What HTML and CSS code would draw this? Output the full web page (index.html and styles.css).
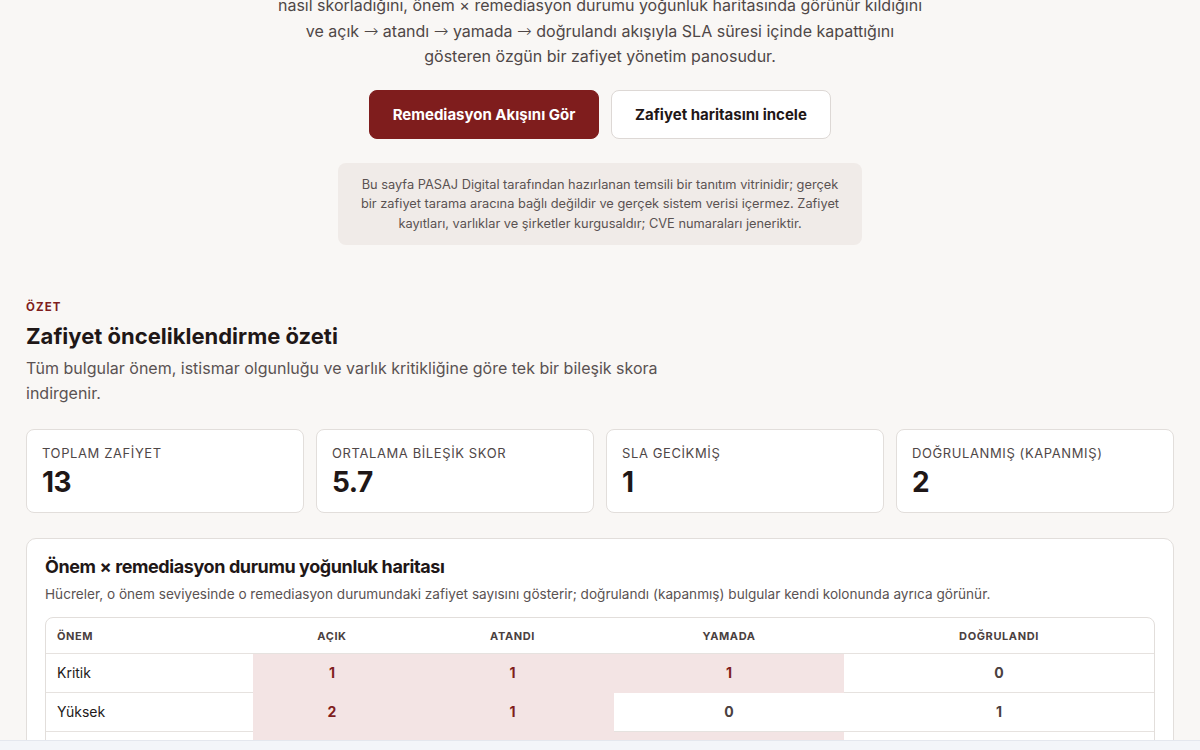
FILE: index.html
```html
<!DOCTYPE html>
<html lang="tr">
<head>
<meta charset="utf-8">
<title>Zafiyet Yönetim Panosu</title>
<link rel="stylesheet" href="styles.css">
</head>
<body>
<main class="page">
  <section class="hero">
    <p class="hero-lead">nasıl skorladığını, önem × remediasyon durumu yoğunluk haritasında görünür kıldığını ve açık <span class="arr">→</span> atandı <span class="arr">→</span> yamada <span class="arr">→</span> doğrulandı akışıyla SLA süresi içinde kapattığını gösteren özgün bir zafiyet yönetim panosudur.</p>
    <div class="hero-actions">
      <a class="btn btn-primary" href="#akis">Remediasyon Akışını Gör</a>
      <a class="btn btn-secondary" href="#harita">Zafiyet haritasını incele</a>
    </div>
    <p class="notice">Bu sayfa PASAJ Digital tarafından hazırlanan temsili bir tanıtım vitrinidir; gerçek bir zafiyet tarama aracına bağlı değildir ve gerçek sistem verisi içermez. Zafiyet kayıtları, varlıklar ve şirketler kurgusaldır; CVE numaraları jeneriktir.</p>
  </section>

  <section class="summary">
    <div class="eyebrow">ÖZET</div>
    <h2 class="section-title">Zafiyet önceliklendirme özeti</h2>
    <p class="section-sub">Tüm bulgular önem, istismar olgunluğu ve varlık kritikliğine göre tek bir bileşik skora indirgenir.</p>

    <div class="stats">
      <div class="stat"><div class="stat-label">Toplam zafiyet</div><div class="stat-value">13</div></div>
      <div class="stat"><div class="stat-label">Ortalama bileşik skor</div><div class="stat-value">5.7</div></div>
      <div class="stat"><div class="stat-label">SLA gecikmiş</div><div class="stat-value">1</div></div>
      <div class="stat"><div class="stat-label">Doğrulanmış (kapanmış)</div><div class="stat-value">2</div></div>
    </div>

    <div class="panel" id="harita">
      <h3 class="panel-title">Önem × remediasyon durumu yoğunluk haritası</h3>
      <p class="panel-sub">Hücreler, o önem seviyesinde o remediasyon durumundaki zafiyet sayısını gösterir; doğrulandı (kapanmış) bulgular kendi kolonunda ayrıca görünür.</p>
      <div class="table-wrap">
        <table class="heat">
          <colgroup>
            <col class="c-sev"><col class="c-open"><col class="c-assigned"><col class="c-patch"><col class="c-verified">
          </colgroup>
          <thead>
            <tr><th class="left">Önem</th><th>Açık</th><th>Atandı</th><th>Yamada</th><th>Doğrulandı</th></tr>
          </thead>
          <tbody>
            <tr><td class="left">Kritik</td><td class="hot">1</td><td class="hot">1</td><td class="hot">1</td><td>0</td></tr>
            <tr><td class="left">Yüksek</td><td class="hot">2</td><td class="hot">1</td><td>0</td><td>1</td></tr>
            <tr><td class="left">Orta</td><td class="hot">2</td><td class="hot">1</td><td class="hot">1</td><td>1</td></tr>
            <tr><td class="left">Düşük</td><td class="hot">1</td><td>0</td><td>0</td><td>0</td></tr>
          </tbody>
        </table>
      </div>
    </div>
  </section>
</main>
<div class="bottom-bar"></div>
</body>
</html>
```

FILE: styles.css
```css
* { box-sizing: border-box; }

html, body {
  margin: 0;
  padding: 0;
  background: #f9f7f5;
  color: #231a1a;
  font-family: Inter, "Noto Sans", "Liberation Sans", sans-serif;
}

.page {
  padding: 0 26px 40px;
}

.hero {
  display: flex;
  flex-direction: column;
  align-items: center;
  text-align: center;
}

.hero-lead {
  margin: -7px 0 0;
  max-width: 652px;
  font-size: 16px;
  line-height: 25.6px;
  color: #4f4747;
}

.arr {
  font-family: "DejaVu Sans", sans-serif;
  font-weight: 200;
  font-size: 17.5px;
  line-height: 0;
}

.hero-actions {
  display: flex;
  gap: 12px;
  margin-top: 20px;
}

.btn {
  display: inline-flex;
  align-items: center;
  justify-content: center;
  height: 49px;
  padding: 0 20px;
  border-radius: 8px;
  font-size: 15px;
  font-weight: 700;
  text-decoration: none;
}

.btn-primary {
  width: 230px;
  background: #7f1d1d;
  color: #ffffff;
  border: 1px solid #7f1d1d;
}

.btn-secondary {
  width: 220px;
  background: #ffffff;
  color: #1f1717;
  border: 1px solid #ddd8d5;
}

.notice {
  margin: 24px 0 0;
  width: 524px;
  padding: 12px 22px;
  background: #f0ebe8;
  border-radius: 8px;
  font-size: 12.8px;
  line-height: 19.5px;
  color: #5a5252;
}

.summary {
  padding-top: 54px;
}

.eyebrow {
  font-size: 11.5px;
  line-height: 16px;
  font-weight: 700;
  letter-spacing: 1.1px;
  color: #7f1d1d;
}

.section-title {
  margin: 7px 0 0;
  font-size: 22px;
  line-height: 28px;
  font-weight: 700;
  letter-spacing: 0;
  color: #1f1717;
}

.section-sub {
  margin: 6px 0 0;
  max-width: 660px;
  font-size: 16px;
  line-height: 25px;
  color: #5a5252;
}

.stats {
  display: grid;
  grid-template-columns: repeat(4, 1fr);
  gap: 12px;
  margin-top: 23px;
}

.stat {
  background: #ffffff;
  border: 1px solid #e2dedb;
  border-radius: 8px;
  padding: 14px 15px 13px;
}

.stat-label {
  font-size: 13px;
  line-height: 18px;
  text-transform: uppercase;
  letter-spacing: 0.6px;
  color: #4f4747;
}

.stat-value {
  margin-top: 3px;
  font-size: 28px;
  line-height: 34px;
  font-weight: 700;
  letter-spacing: -0.5px;
  color: #1f1717;
}

.panel {
  margin-top: 25px;
  background: #ffffff;
  border: 1px solid #e2dedb;
  border-radius: 10px;
  padding: 16px 18px 18px;
}

.panel-title {
  margin: 0;
  font-size: 18px;
  line-height: 24px;
  font-weight: 700;
  letter-spacing: -0.4px;
  color: #1f1717;
}

.panel-sub {
  margin: 5px 0 0;
  font-size: 13.6px;
  line-height: 20px;
  color: #5a5252;
}

.table-wrap {
  margin-top: 13px;
  border: 1px solid #e2dedb;
  border-radius: 8px;
  overflow: hidden;
}

.heat {
  width: 100%;
  border-collapse: collapse;
  table-layout: fixed;
}

.c-sev { width: 207px; }
.c-open { width: 158px; }
.c-assigned { width: 203px; }
.c-patch { width: 230px; }
.c-verified { width: auto; }

.heat th {
  height: 35px;
  font-size: 11px;
  font-weight: 700;
  letter-spacing: 0.6px;
  text-transform: uppercase;
  color: #4a4040;
  text-align: center;
  border-bottom: 1px solid #e6e2df;
  padding: 0 11px;
}

.heat td {
  height: 39px;
  font-size: 14px;
  font-weight: 700;
  text-align: center;
  color: #4a4040;
  border-bottom: 1px solid #e6e2df;
  padding: 0 11px;
}

.heat .left {
  text-align: left;
}

.heat td.left {
  font-weight: 400;
  color: #231a1a;
}

.heat td.hot {
  background: #f3e4e4;
  color: #7f1d1d;
  border-bottom-color: #f3e4e4;
}

.heat tbody tr:last-child td {
  border-bottom: 0;
}

.bottom-bar {
  position: fixed;
  left: 0;
  right: 0;
  bottom: 0;
  height: 10px;
  background: #f3f5f9;
  border-top: 1px solid #e4e7ee;
}
```
